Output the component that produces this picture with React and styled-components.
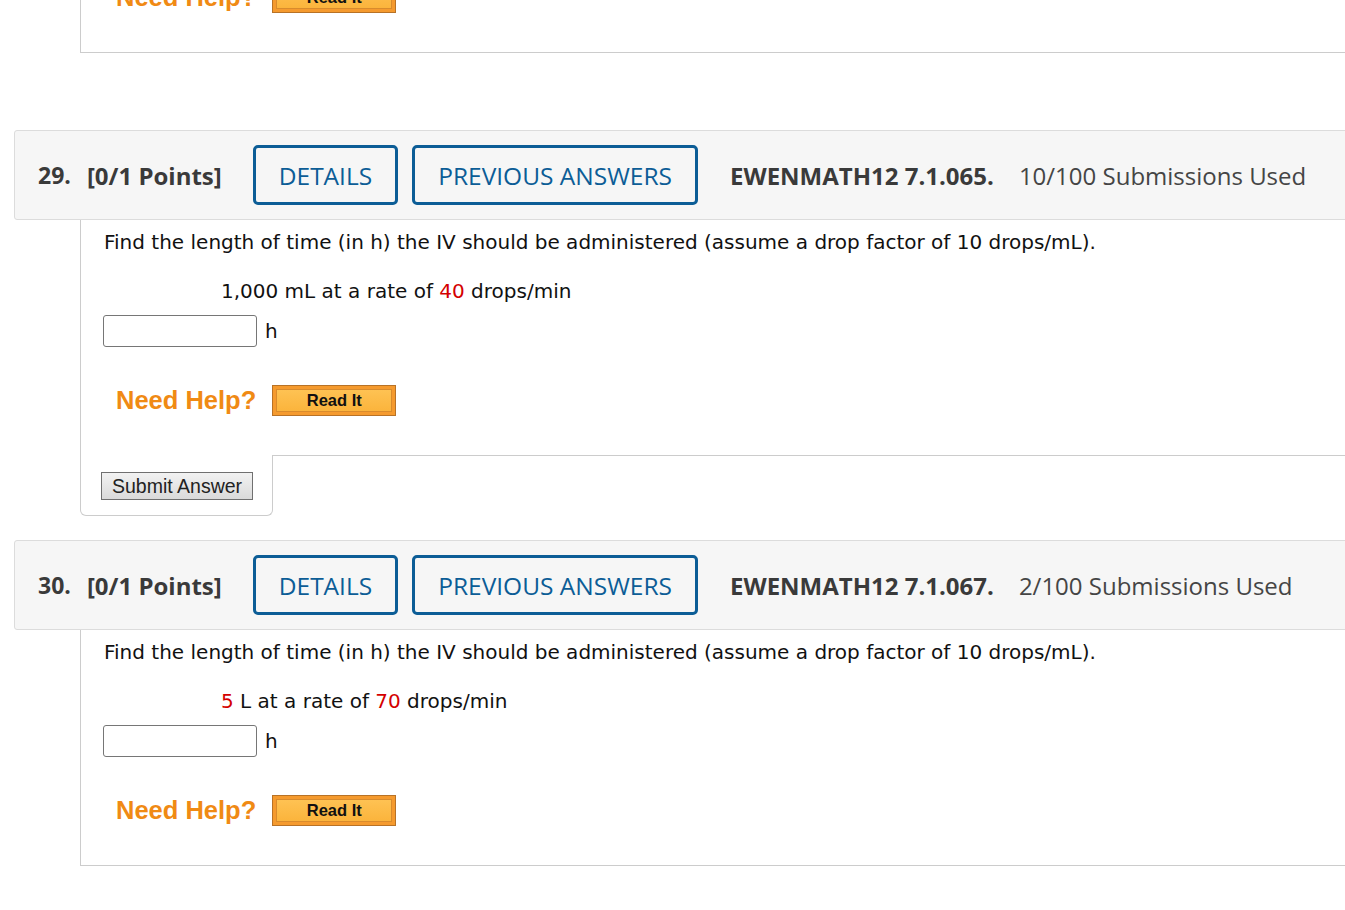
import React from 'react'
import styled, { createGlobalStyle } from 'styled-components'

const GlobalStyle = createGlobalStyle`
    html, body {
        margin: 0;
        padding: 0;
        background: #fff;
        overflow: hidden;
    }
`

const Page = styled.div`
    width: 1420px;
    padding-left: 14px;
    box-sizing: border-box;
`

const Header = styled.div`
    display: flex;
    align-items: center;
    height: 90px;
    box-sizing: border-box;
    padding-left: 23px;
    background: #f6f6f6;
    border: 1px solid #dcdcdc;
    border-radius: 3px;
    font-family: "Open Sans", sans-serif;
    color: #3a3a3a;
`

const Num = styled.span`
    font-size: 23px;
    font-weight: 700;
    margin-right: 16px;
`

const Points = styled.span`
    font-size: 24px;
    font-weight: 700;
    margin-right: 31px;
`

const OutlineButton = styled.button`
    height: 60px;
    box-sizing: border-box;
    padding: 0 23px;
    margin-right: ${p => p.$gap || 14}px;
    background: transparent;
    border: 3px solid #0c5d96;
    border-radius: 5px;
    color: #0c5d96;
    font-family: "Open Sans", sans-serif;
    font-size: 24.5px;
    font-weight: 400;
    text-transform: uppercase;
`

const Source = styled.span`
    font-size: 24px;
    font-weight: 700;
    margin-right: 25px;
`

const Used = styled.span`
    font-size: 24px;
    color: #454545;
`

const Body = styled.div`
    margin-left: 66px;
    border-left: 1px solid #cccccc;
    border-bottom: ${p => (p.$open ? 'none' : '1px solid #cccccc')};
    padding: ${p => p.$top}px 0 ${p => p.$bottom}px 23px;
    margin-top: ${p => p.$mt || 0}px;
    margin-bottom: ${p => p.$mb || 0}px;
    font-family: Verdana, "DejaVu Sans", sans-serif;
    font-size: 20px;
    color: #111;
`

const Line = styled.div`
    line-height: 24px;
    height: 24px;
    white-space: nowrap;
    margin-left: ${p => p.$indent || 0}px;
    margin-bottom: ${p => p.$mb || 0}px;
`

const Red = styled.span`
    color: #d40000;
`

const AnswerRow = styled.div`
    display: flex;
    align-items: center;
    height: 32px;
    margin-left: -1px;
    margin-bottom: 38px;
`

const Input = styled.input`
    width: 154px;
    height: 32px;
    box-sizing: border-box;
    border: 1px solid #767676;
    border-radius: 3px;
    margin: 0 8px 0 0;
    padding: 0 4px;
`

const HelpRow = styled.div`
    display: flex;
    align-items: center;
    height: 31px;
    padding-left: 12px;
`

const NeedHelp = styled.span`
    font-family: "Liberation Sans", Arial, sans-serif;
    font-size: 25.5px;
    font-weight: 700;
    color: #f08a14;
    margin-right: 16px;
`

const ReadIt = styled.button`
    width: 124px;
    height: 31px;
    box-sizing: border-box;
    padding: 3px;
    background: #f59a2e;
    border: 1px solid #b87226;
    display: flex;
    cursor: pointer;
`

const ReadItInner = styled.span`
    flex: 1;
    display: flex;
    align-items: center;
    justify-content: center;
    background: linear-gradient(#fec253, #fbb43c);
    border: 1px solid #d98b2c;
    font-family: "Liberation Sans", Arial, sans-serif;
    font-size: 16.5px;
    font-weight: 700;
    color: #111;
`

const Footer = styled.div`
    display: flex;
    margin-left: 66px;
    margin-bottom: 24px;
`

const SubmitTab = styled.div`
    width: 193px;
    box-sizing: border-box;
    padding: 17px 0 15px 20px;
    border: 1px solid #cccccc;
    border-top: none;
    border-radius: 0 0 6px 6px;
`

const Filler = styled.div`
    flex: 1;
    border-top: 1px solid #cccccc;
`

const SubmitButton = styled.button`
    height: 28px;
    padding: 0 10px;
    background: linear-gradient(#f2f2f2, #dadada);
    border: 1px solid #707070;
    border-radius: 0;
    font-family: "Liberation Sans", Arial, sans-serif;
    font-size: 19.5px;
    line-height: 26px;
    color: #222;
`

const Help = () => (
    <HelpRow>
        <NeedHelp>Need Help?</NeedHelp>
        <ReadIt><ReadItInner>Read It</ReadItInner></ReadIt>
    </HelpRow>
)

const QuestionHeader = ({ num, source, used }) => (
    <Header>
        <Num>{num}.</Num>
        <Points>[0/1 Points]</Points>
        <OutlineButton>Details</OutlineButton>
        <OutlineButton $gap={32}>Previous Answers</OutlineButton>
        <Source>{source}</Source>
        <Used>{used}</Used>
    </Header>
)

const App = () => {
    return (
        <>
            <GlobalStyle />
            <Page>
                <Body $top={0} $bottom={39} $mt={-18} $mb={77}>
                    <Help />
                </Body>

                <QuestionHeader num={29} source="EWENMATH12 7.1.065." used="10/100 Submissions Used" />
                <Body $open $top={10} $bottom={39}>
                    <Line $mb={25}>Find the length of time (in h) the IV should be administered (assume a drop factor of 10 drops/mL).</Line>
                    <Line $indent={117} $mb={12}>1,000 mL at a rate of <Red>40</Red> drops/min</Line>
                    <AnswerRow><Input type="text" />h</AnswerRow>
                    <Help />
                </Body>
                <Footer>
                    <SubmitTab><SubmitButton>Submit Answer</SubmitButton></SubmitTab>
                    <Filler />
                </Footer>

                <QuestionHeader num={30} source="EWENMATH12 7.1.067." used="2/100 Submissions Used" />
                <Body $top={10} $bottom={39}>
                    <Line $mb={25}>Find the length of time (in h) the IV should be administered (assume a drop factor of 10 drops/mL).</Line>
                    <Line $indent={117} $mb={12}><Red>5</Red> L at a rate of <Red>70</Red> drops/min</Line>
                    <AnswerRow><Input type="text" />h</AnswerRow>
                    <Help />
                </Body>
            </Page>
        </>
    )
}

export default App
